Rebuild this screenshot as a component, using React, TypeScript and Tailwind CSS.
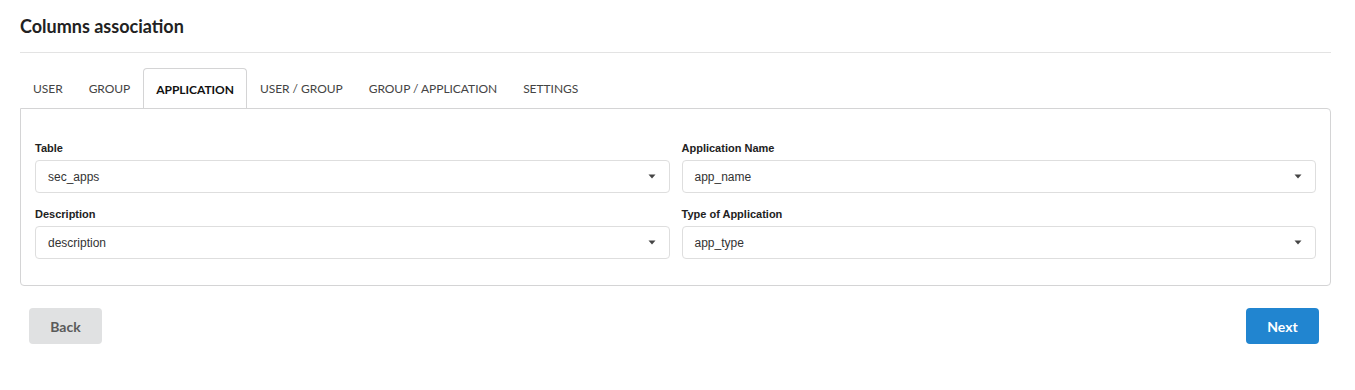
import React from 'react'

const tabs = ['USER', 'GROUP', 'APPLICATION', 'USER / GROUP', 'GROUP / APPLICATION', 'SETTINGS']

const Select = ({ label, value }: { label: string; value: string }) => (
    <div className="flex flex-col">
        <label className="text-[11px] font-bold text-[#222] mb-[5px] leading-[13px]" style={{ fontFamily: '"Liberation Sans", Arial, sans-serif' }}>
            {label}
        </label>
        <div className="h-[33px] border border-[#dedede] rounded-[4px] flex items-center justify-between pl-[12px] pr-[12px] bg-white">
            <span className="text-[12px] text-[#333]" style={{ fontFamily: '"Liberation Sans", Arial, sans-serif' }}>{value}</span>
            <svg width="8" height="5" viewBox="0 0 8 5" className="mr-[1px]">
                <path d="M0.5 0.5 L7.5 0.5 L4 4.5 Z" fill="#444" />
            </svg>
        </div>
    </div>
)

const App = () => {
    return (
        <div className="w-[1355px] h-[390px] bg-white pl-5 pr-[24px] pt-[14px]" style={{ fontFamily: 'Lato, "Open Sans", sans-serif' }}>
            <h1 className="text-[18px] font-bold text-[#222] leading-[24px]">Columns association</h1>
            <div className="mt-[14px] border-t border-[#e3e3e3]" />

            <div className="mt-[15px] flex">
                {tabs.map((t) => (
                    <div
                        key={t}
                        className={
                            t === 'APPLICATION'
                                ? 'h-[40px] pt-[2px] px-[12px] flex items-center text-[12px] tracking-[-0.04px] text-[#111] font-bold border border-[#d4d4d5] border-b-0 rounded-t-[4px] bg-white -mb-px relative z-10'
                                : 'h-[40px] pt-[2px] px-[13px] flex items-center text-[12px] tracking-[-0.04px] text-[#444]'
                        }
                    >
                        {t}
                    </div>
                ))}
            </div>

            <div className="border border-[#d4d4d5] rounded-b-[4px] rounded-tr-[4px] px-[14px] pt-[33px] pb-[26px]">
                <div className="grid grid-cols-2 gap-x-[12px] gap-y-[15px]">
                    <Select label="Table" value="sec_apps" />
                    <Select label="Application Name" value="app_name" />
                    <Select label="Description" value="description" />
                    <Select label="Type of Application" value="app_type" />
                </div>
            </div>

            <div className="mt-[22px] flex justify-between pl-[9px] pr-[12px]">
                <button className="w-[73px] h-[36px] rounded-[4px] bg-[#e0e1e2] text-[#5a5a5a] text-[14px] font-bold">Back</button>
                <button className="w-[73px] h-[36px] rounded-[4px] bg-[#2185d0] text-white text-[14px] font-bold">Next</button>
            </div>
        </div>
    )
}

export default App
